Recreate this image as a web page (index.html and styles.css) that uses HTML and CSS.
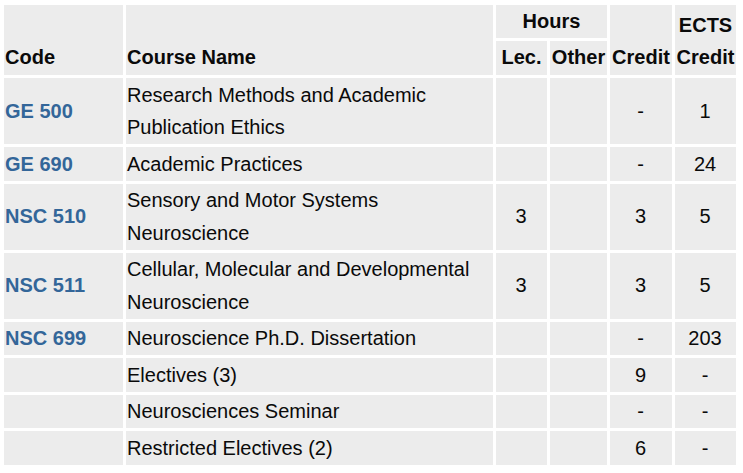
FILE: index.html
```html
<!DOCTYPE html>
<html>
<head>
<meta charset="utf-8">
<link rel="stylesheet" href="styles.css">
</head>
<body>
<table class="courses">
  <colgroup>
    <col class="c-code">
    <col class="c-name">
    <col class="c-lec">
    <col class="c-other">
    <col class="c-credit">
    <col class="c-ects">
  </colgroup>
  <thead>
    <tr class="h1">
      <th rowspan="2" class="left">Code</th>
      <th rowspan="2" class="left">Course Name</th>
      <th colspan="2" class="mid">Hours</th>
      <th rowspan="2">Credit</th>
      <th rowspan="2" class="ects">ECTS Credit</th>
    </tr>
    <tr class="h2">
      <th>Lec.</th>
      <th>Other</th>
    </tr>
  </thead>
  <tbody>
    <tr><td class="code">GE 500</td><td class="name">Research Methods and Academic Publication Ethics</td><td></td><td></td><td class="num">-</td><td class="num">1</td></tr>
    <tr><td class="code">GE 690</td><td class="name">Academic Practices</td><td></td><td></td><td class="num">-</td><td class="num">24</td></tr>
    <tr><td class="code">NSC 510</td><td class="name">Sensory and Motor Systems Neuroscience</td><td class="num">3</td><td></td><td class="num">3</td><td class="num">5</td></tr>
    <tr><td class="code">NSC 511</td><td class="name">Cellular, Molecular and Developmental Neuroscience</td><td class="num">3</td><td></td><td class="num">3</td><td class="num">5</td></tr>
    <tr><td class="code">NSC 699</td><td class="name">Neuroscience Ph.D. Dissertation</td><td></td><td></td><td class="num">-</td><td class="num">203</td></tr>
    <tr><td class="code"></td><td class="name">Electives (3)</td><td></td><td></td><td class="num">9</td><td class="num">-</td></tr>
    <tr><td class="code"></td><td class="name">Neurosciences Seminar</td><td></td><td></td><td class="num">-</td><td class="num">-</td></tr>
    <tr><td class="code"></td><td class="name">Restricted Electives (2)</td><td></td><td></td><td class="num">6</td><td class="num">-</td></tr>
  </tbody>
</table>
</body>
</html>
```

FILE: styles.css
```css
html, body {
  background: #ffffff;
}
body {
  margin: 2px 0 0 1px;
  font-family: "Liberation Sans", Arial, Helvetica, sans-serif;
  font-size: 20px;
  color: #0a0a0a;
}
.courses {
  table-layout: fixed;
  width: 738px;
  border-collapse: separate;
  border-spacing: 3px;
}
.c-code { width: 119px; }
.c-name { width: 367px; }
.c-lec { width: 51px; }
.c-other { width: 57px; }
.c-credit { width: 62px; }
.c-ects { width: 61px; }

.courses th,
.courses td {
  background: #ececec;
  padding: 1px 2px 1px 1px;
  line-height: 32px;
}
.courses th {
  font-weight: bold;
  text-align: center;
  vertical-align: bottom;
  padding: 0 1px 2px 1px;
}
.courses th.left {
  text-align: left;
}
.courses th.ects {
  padding-left: 0;
  padding-right: 0;
}
.courses .h1 th.mid {
  vertical-align: middle;
  padding: 0 1px 1px;
}
.courses td {
  vertical-align: middle;
  line-height: 32.4px;
  padding-top: 0.6px;
  padding-bottom: 0.6px;
}
.courses td.code {
  color: #336699;
  font-weight: bold;
}
.courses td.name {
  text-align: left;
}
.courses td.num {
  text-align: center;
}
```
